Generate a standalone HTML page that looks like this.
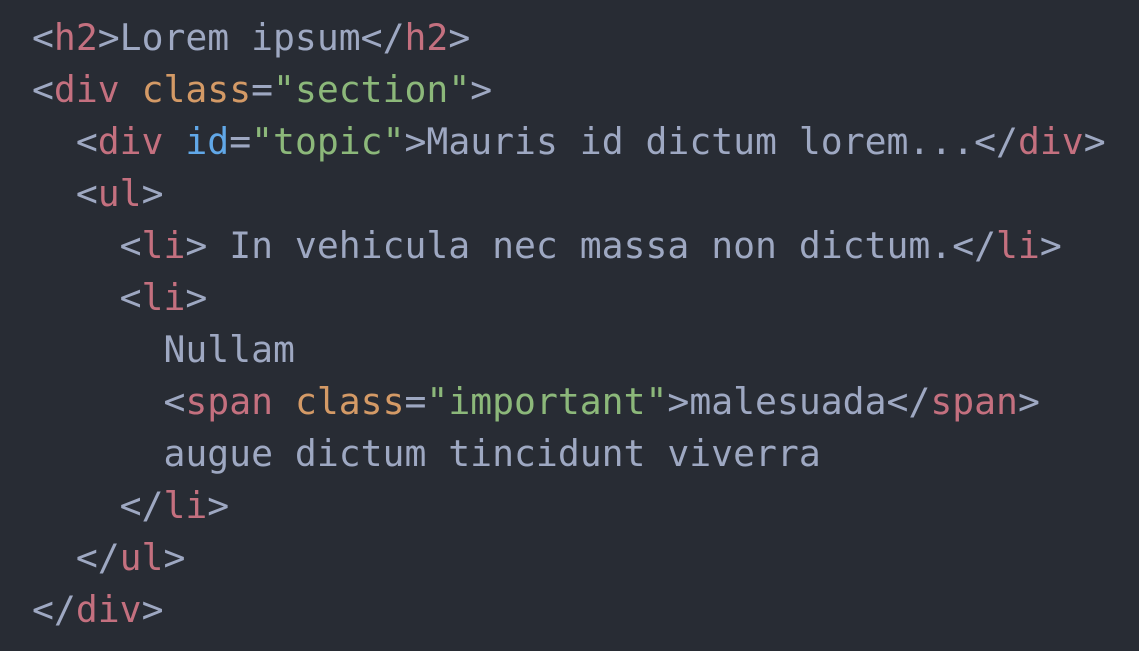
<!DOCTYPE html>
<html><head><meta charset="utf-8"><style>
html,body{margin:0;padding:0;background:#282c34;width:1139px;height:651px;overflow:hidden}
pre{margin:0;position:absolute;left:32px;top:12px;font-family:"DejaVu Sans Mono","Liberation Mono",monospace;font-size:36.4px;line-height:52px;color:#9ea8c2;white-space:pre}
.t{color:#c4707f}.a{color:#d49a66}.s{color:#8cb87a}.i{color:#61a8e8}
</style></head><body>
<pre>&lt;<span class="t">h2</span>&gt;Lorem ipsum&lt;/<span class="t">h2</span>&gt;
&lt;<span class="t">div</span> <span class="a">class</span>=<span class="s">"section"</span>&gt;
  &lt;<span class="t">div</span> <span class="i">id</span>=<span class="s">"topic"</span>&gt;Mauris id dictum lorem...&lt;/<span class="t">div</span>&gt;
  &lt;<span class="t">ul</span>&gt;
    &lt;<span class="t">li</span>&gt; In vehicula nec massa non dictum.&lt;/<span class="t">li</span>&gt;
    &lt;<span class="t">li</span>&gt;
      Nullam
      &lt;<span class="t">span</span> <span class="a">class</span>=<span class="s">"important"</span>&gt;malesuada&lt;/<span class="t">span</span>&gt;
      augue dictum tincidunt viverra
    &lt;/<span class="t">li</span>&gt;
  &lt;/<span class="t">ul</span>&gt;
&lt;/<span class="t">div</span>&gt;</pre>
</body></html>
